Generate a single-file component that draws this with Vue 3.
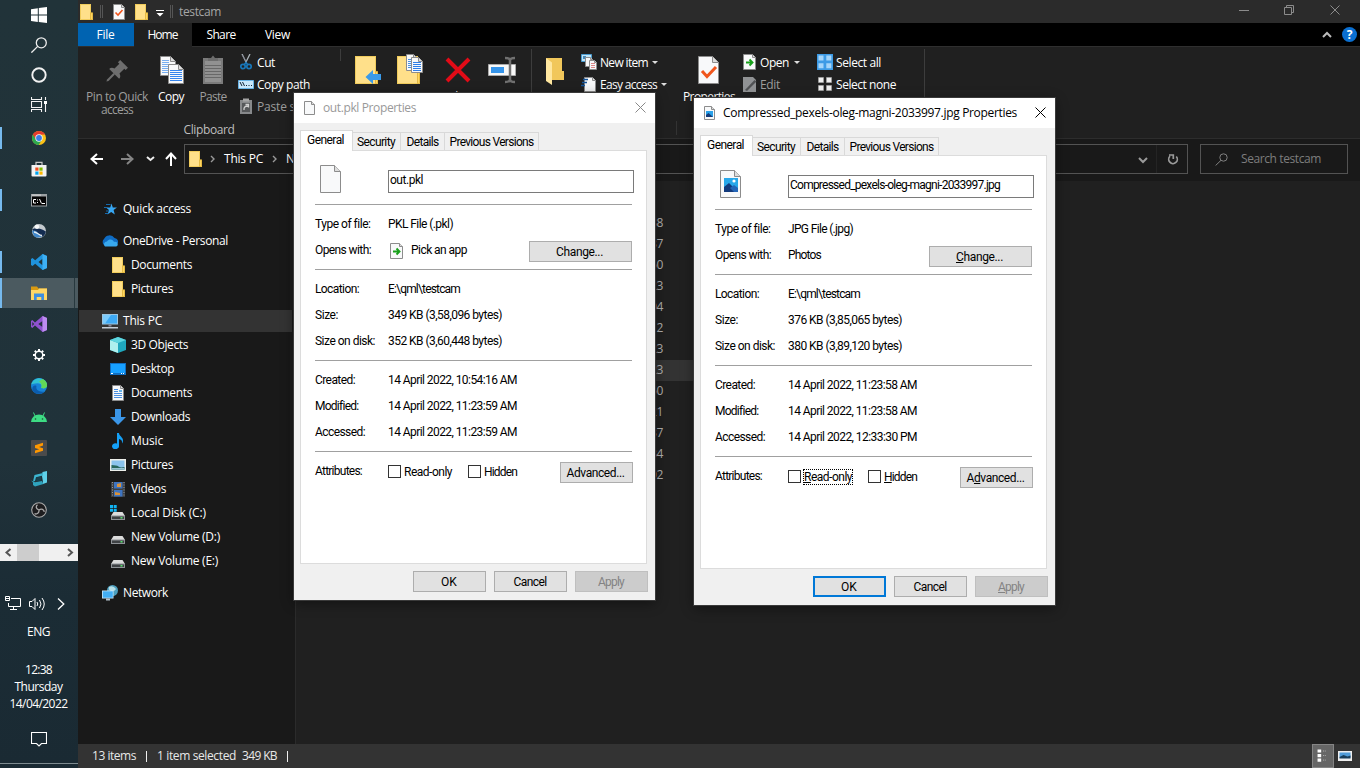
<script setup>
// Spreads letters so that a label takes the given width in pixels.
const vFit = {
  mounted(el, { value }) {
    if (!value) return
    const natural = el.getBoundingClientRect().width
    const count = el.textContent.trim().length
    el.style.letterSpacing = (value - natural) / count + 'px'
  },
}

const page = (x, y, w, h, f = 4) =>
  `<path d="M${x + 0.5} ${y + 0.5}h${w - f - 1}l${f} ${f}v${h - f - 1}h${-(w - 1)}z" fill="#f8f9fa" stroke="#8c8c8c"/><path d="M${x + w - f - 0.5} ${y + 0.5}v${f}h${f}" fill="#ddd" stroke="#8c8c8c"/>`
const docLines = (x, y, w, n, c = '#4a90e2') =>
  Array.from({ length: n }, (_, i) => `<path d="M${x} ${y + i * 2 + 0.5}h${w}" stroke="${c}"/>`).join('')
const folder = (x, y, w, h) =>
  `<path d="M${x} ${y}h${w - 2}v${h * 0.55}h2v${h * 0.45}h${-w}z" fill="#f1cc5c"/><path d="M${x + 1} ${y + 1}h${w - 4}v${h - 2}h${-(w - 4)}z" fill="#ffe08a"/><path d="M${x + w - 2.5} ${y + h * 0.55}h2v${h * 0.45 - 0.5}h-2z" fill="#fdd663" stroke="#d9a92f" stroke-width=".6"/>`
const drive = '<path d="M3.500 7h9l2.500 4H1z" fill="#dcdcdc"/><path d="M1 10.500h14V15H1z" fill="#8e9296"/><path d="M2 11.500h12V14H2z" fill="#3e4144"/><path d="M10.500 12h2v1.500h-2z" fill="#55e06a"/>'

const icons = {
  win: '<path d="M0 2.300 6.800 1.300V7.600H0zM7.800 1.100 16 0v7.600H7.800zM0 8.500h6.800v6.400L0 13.900zM7.800 8.500H16V16l-8.200-1.100z" fill="#fff"/>',
  search: '<circle cx="10.300" cy="5.800" r="5" fill="none" stroke="#eee" stroke-width="1.300"/><path d="M6.700 9.400.4 15.600" stroke="#eee" stroke-width="1.300"/>',
  cortana: '<circle cx="8" cy="8" r="6.700" fill="none" stroke="#f1f1f1" stroke-width="1.900"/>',
  tasks: '<path d="M.5 0v2.500h10V0M.5 15v-2.500h10V15M.5 4.500h10v6H.5zM14.500 0v3M14.500 7v8" fill="none" stroke="#f4f4f4" stroke-width="1.100"/><path d="M13 4h3v3h-3z" fill="#fff"/>',
  chrome: '<circle cx="8" cy="8" r="7" fill="#fbc116"/><path d="M1.900 4.500A7 7 0 0 0 7.700 15L11 9.700 8 8z" fill="#2da94f"/><path d="M1.900 4.500 5 9.800 8 8 8 4.700 14.100 4.500A7 7 0 0 0 1.900 4.500z" fill="#e33b2e"/><circle cx="8" cy="8" r="3.700" fill="#f5f5f5"/><circle cx="8" cy="8" r="2.900" fill="#3b7de9"/>',
  store: '<path d="M5 4.500V1.300h6v3.200" fill="none" stroke="#c8c8c8" stroke-width="1.200"/><path d="M.500 4h15v10.500a1 1 0 0 1-1 1h-13a1 1 0 0 1-1-1z" fill="#f3f3f3"/><path d="M4.300 6.500h3.200v3.200H4.300z" fill="#f25022"/><path d="M8.400 6.500h3.200v3.200H8.400z" fill="#7fba00"/><path d="M4.300 10.500h3.200v3.200H4.300z" fill="#00a4ef"/><path d="M8.400 10.500h3.200v3.200H8.400z" fill="#ffb900"/>',
  cmd: '<path d="M0 2h16v12.500H0z" fill="#9ba0a3"/><path d="M1 4.500h14v9H1z" fill="#050505"/><path d="M1 2.600h9v1H1z" fill="#ddd"/><path d="M5 7.500H2.500v3.500H5M6.500 7.500v1M6.500 10v1M8.500 7l2 4.500M11 11.500h3" fill="none" stroke="#fff" stroke-width="1"/>',
  globe: '<circle cx="8" cy="8" r="7" fill="#c3c9cd"/><path d="M1.200 6.500C4 4.500 9 5 14.900 8.500A7 7 0 0 1 12 13.700L4 11z" fill="#132c50"/><path d="M1 8c2-1.500 5 0 6 2s3 2.500 4.500 2.500A6 6 0 0 1 3 13z" fill="#3f86c8"/><path d="M3 9c3 0 5 3.500 8 3.500" stroke="#e8eef2" stroke-width="1.300" fill="none"/><circle cx="6" cy="3.800" r="2.200" fill="#f7f8f8"/>',
  vscode: '<path d="M11.500 0 16 2v12l-4.500 2L4.200 9.700 1.500 12 0 11.100V4.900L1.500 4l2.700 2.300zM11.500 4.800 7.500 8l4 3.200z" fill="#1f93dc" fill-rule="evenodd"/><path d="M11.500 0 16 2v12l-4.500 2z" fill="#3db0f4"/>',
  explorer: '<path d="M0 1.500h6l1.500 2H16v4H0z" fill="#d99a12"/><path d="M0 5h7l1-1.500h8V15H0z" fill="#ffd766"/><path d="M3 15V8.500h10V15h-2.700v-3H5.700v3z" fill="#3d8fe0"/>',
  vs: '<path d="M11.500 0 16 2v12l-4.500 2L4 9.600 1.300 12 0 11V5l1.300-1L4 6.400zM11.500 5 7.300 8l4.200 3zM1.300 6v4L3.200 8z" fill="#8f52cf" fill-rule="evenodd"/><path d="M11.500 0 16 2v12l-4.500 2z" fill="#bd8cf0"/>',
  gear: '<circle cx="8" cy="8" r="3.800" fill="none" stroke="#fff" stroke-width="1.500"/><g stroke="#fff" stroke-width="2"><path d="M8 2v2M8 12v2M2 8h2M12 8h2M3.800 3.800l1.300 1.300M10.900 10.900l1.300 1.300M12.200 3.800l-1.300 1.300M5.100 10.900l-1.300 1.300"/></g>',
  edge: '<circle cx="8" cy="8" r="8" fill="#1784d8"/><path d="M.3 6.500C1.500 1.500 7-.8 11.500.9 15.500 2.500 17 7 15.500 9c-1.500 2-5 1.500-5.500.5 1.500-2.500-.5-4.300-3.500-4.300C3.500 5.200 1 6 .3 6.500z" fill="#31c2d3"/><path d="M11.500.9C15.500 2.500 17 7 15.500 9c-1.500 2-5 1.500-5.500.5C12 7 9 4 8 3.500z" fill="#62d957"/><path d="M5.500 8C4.500 11 7 14.500 13.500 13.500 10 17 4 16.500 1.500 12.500.5 9 3 6.500 5.500 8z" fill="#0b5cad"/>',
  android: '<path d="M0 13a8 7.500 0 0 1 16 0z" fill="#3ddc84"/><path d="M4 7 2.500 3.500M12 7l1.500-3.500" stroke="#3ddc84"/><circle cx="4.500" cy="10" r=".8" fill="#1d4a34"/><circle cx="11.500" cy="10" r=".8" fill="#1d4a34"/>',
  sublime: '<rect width="16" height="16" rx="1" fill="#4b4b4b"/><path d="M4 5.300 12 2.800v2.800L8 7l4 1.200v2.600L4 13.300v-2.700L8.200 9.200 4 8z" fill="#ff9800"/>',
  azure: '<path d="M11.500 1 16 0v11.500L12 13v-2l-1-6z" fill="#5fd0e8"/><path d="M3.500 4 12 2v2.500L5 6.300 4 10l-2 .5z" fill="#3cb5d0"/><path d="M0 9.500l4 1.700 7-1.200 1.500 3L4 15.500l-2-1.500v-2.500z" fill="#2fa3bd"/><path d="M5.500 6.500 10 5.500v4l-5 1z" fill="#17414e"/>',
  obs: '<circle cx="8" cy="8" r="7.300" fill="#1d1d1f" stroke="#a9a9a9" stroke-width="1.100"/><g fill="none" stroke="#aaa" stroke-width="1.300"><path d="M8 8C5 7 4.500 4.500 6.500 2.800M8 8c2.500-2 5-.5 5.300 1.800M8 8c.2 3-2 4.700-4.500 3.700"/></g>',
  note: '<path d="M.5 1.500h15v11h-5L8 15l-2.500-2.500h-5z" fill="none" stroke="#fff" stroke-width="1.100"/>',
  net: '<path d="M6 2.500h9.500v8H3.500V7M8.500 11v3M5 13.500h7M.5.500h4v4h-4zM1 2.500h3" fill="none" stroke="#fff"/>',
  sound: '<path d="M.5 5.500h2.500l3-3v11l-3-3H.5z" fill="none" stroke="#fff"/><path d="M8 6q1.500 2 0 4M10.500 4q3 4 0 8M13 2q4.500 6 0 12" fill="none" stroke="#fff"/>',
  folder: folder(2, 0, 13, 16),
  prop: page(2, 0, 12, 16, 3) + '<path d="M4.500 8.500 7 11l4.500-5" fill="none" stroke="#f0561d" stroke-width="1.600"/>',
  cut: '<path d="M4 0 8.500 9M12 0 7.500 9" stroke="#aab2b8" stroke-width="1.300"/><path d="M4 1l4 6" stroke="#667" stroke-width=".6"/><g fill="none" stroke="#1876b8" stroke-width="1.700"><circle cx="5" cy="12.500" r="2.200"/><circle cx="11" cy="12.500" r="2.200"/><path d="M8.500 8 6 11M7.500 8l2.500 3"/></g>',
  path: '<path d="M.5 4.500h15v8H.5z" fill="#c9e7fb" stroke="#68b3e5"/><path d="M2 6l2 4M4.500 6l2 4" stroke="#123"/><path d="M8 9.500h1M10.500 9.500h1M13 9.500h1" stroke="#123"/>',
  pasteS: '<path d="M2 2h12v14H2z" fill="#87898b"/><path d="M5 .5h6v3H5z" fill="#a5a5a5"/><path d="M4 5h8v9H4z" fill="#56585a"/><path d="M6 12q-.5-4 4-4M7.500 6.500h3v3" stroke="#d0d0d0" fill="none" stroke-width="1.300"/>',
  newItem: '<path d="M.5.5h10v7H.5z" fill="#bfe4f7" stroke="#4b9cd0"/><path d="M2 2h3v3H2z" fill="#4789b9"/>' + page(4, 3, 8, 10, 2) + page(8, 6, 8, 10, 2) + docLines(10, 9, 4, 3, '#d88'),
  easy: page(3, 1, 12, 15, 3) + '<path d="M2 3.500h5M1 6.500h5M0 9.500h4" stroke="#15559a" stroke-width="1.400"/>',
  open: page(1, 0, 13, 16, 3) + '<path d="M4 8.500h6M7.500 5.500l3 3-3 3" fill="none" stroke="#18a01b" stroke-width="1.900"/>',
  edit: '<path d="M1 1h10l3 3v12H1z" fill="#909294"/><path d="M3 14 12.500 4l2 1.500L5 15z" fill="#505254"/>',
  selAll: '<path d="M0 0h16v16H0z" fill="#3d9be6"/><path d="M1.500 1.500h5v5h-5zM9.300 1.500h5v5h-5zM1.500 9.300h5v5h-5zM9.300 9.300h5v5h-5z" fill="#a5d5fa"/>',
  selNone: '<path d="M1.500 1.500h5v5h-5zM9.500 1.500h5v5h-5zM1.500 9.500h5v5h-5zM9.500 9.500h5v5h-5z" fill="#eee" stroke="#aaa" stroke-width=".6"/>',
  star: '<path d="M9.500 2.500l1.300 3.900 4.200.1-3.400 2.600 1.200 4.400-3.600-2.500-3.700 2.500 1.500-4.400L4 6.500h4.200z" fill="#38a7f3"/><path d="M4 3.500h4.500M2 6.500h4M4 10h3M3 12.500h3.500" stroke="#1769aa" stroke-width="1.100"/>',
  cloud: '<path d="M2 12a4 4 0 0 1 0-6 6 6 0 0 1 10.500-1c3 .5 4 3 3.500 5l-4 3z" fill="#0f6cc4"/><path d="M3 13.500c-2-1-1-5 2-5 2-3 6-2.500 7 .5 4-1 5 4 2 4.500z" fill="#39a9ee"/>',
  pc: '<path d="M0 1h16v10.500H0z" fill="#9bc6e2"/><path d="M1 2h14v8.500H1z" fill="#3eaaf5"/><path d="M1 2h8L3 10.500H1z" fill="#7cccfd"/><path d="M6.500 11.500h3v2h-3z" fill="#889"/><path d="M0 14h16v1.500H0z" fill="#c3ced8"/>',
  cube: '<path d="M0 3 8 0l8 3v10l-8 3-8-3z" fill="#1fa7bd"/><path d="M0 3l8 3v10l-8-3z" fill="#aef0ee"/><path d="M0 3l8-3 8 3-8 3z" fill="#5fd6df"/>',
  desk: '<path d="M0 2h16v12H0z" fill="#0f6dc0"/><path d="M1 3h14v9H1z" fill="#17a0ff"/><path d="M1 12.500h2M11 12.500h1M13 12.500h1" stroke="#fff"/>',
  doc: page(2, 0, 12, 16, 3) + docLines(4, 4, 4, 2) + docLines(4, 8, 8, 3) + '<path d="M9 5h3v2H9z" fill="#6ab4e8"/>',
  down: '<path d="M5 0h6v8h5l-8 8-8-8h5z" fill="#3b96e8"/>',
  music: '<path d="M7 0h2c0 3 4 4 4 7.500 0 1.500-.5 2.500-1 3 .5-3-1-4-3-4.500v7a3.500 3 0 1 1-2-2.500z" fill="#14a0f7"/>',
  pic: '<path d="M0 2h16v12H0z" fill="#eceeea"/><path d="M1.500 3.500h13v9h-13z" fill="#8cc4ed"/><path d="M1.500 8q5 0 7 1.500t6 .5v2.500h-13z" fill="#27675c"/><path d="M1.500 11h13v1.500h-13z" fill="#9bc5d5"/>',
  video: '<path d="M1 1h14v15H1z" fill="#3c3f42"/><path d="M4 1h8.500v6.500H4zM4 9h8.500v6.500H4z" fill="#3e74c0"/><path d="M7 3l4-1v4H7zM5 11l5 1v2H5z" fill="#d9923a"/><path d="M2.500 1v15M14 1v15" stroke="#999" stroke-dasharray="1 1.500"/>',
  diskC: drive + '<path d="M0 0h3v3H0zM3.700 0h3v3h-3zM0 3.700h3v3H0zM3.700 3.700h3v3h-3z" fill="#10b4f4"/>',
  disk: drive,
  network: '<circle cx="10.500" cy="5.500" r="5.500" fill="#4d9fbe"/><path d="M7 2q4-2 7 2-2 3-5 2T7 2" fill="#b7dfe7"/><path d="M0 5.500h11.500v8H0z" fill="#cbe8fb"/><path d="M.8 6.300h10v6.400H.8z" fill="#43aef4"/><path d="M4 13.500h4v2H4z" fill="#b3c0ca"/>',
  blank: page(2, 1, 11, 14, 3),
  photo: page(2, 1, 11, 14, 3) + '<path d="M4 6h7v6H4z" fill="#2aa2ea"/><path d="M4 10l2.500-2L11 12H4z" fill="#143a78"/>',
  // Large pictures, drawn on a 32 × 32 canvas.
  pin: '<g transform="translate(0 1) rotate(45 16 16)" fill="#6e6e6e"><path d="M10.500 6h11v3.200h-2V16q3.500 1 3.500 4H9q0-3 3.500-4V9.200h-2z"/><path d="M15 20h2v9l-1 2-1-2z"/></g>',
  copy: page(5, 2, 16, 20, 5) + docLines(7, 6, 7, 7, '#78aef0') + page(13, 10, 16, 20, 5) + docLines(15, 16, 12, 6, '#3585ee'),
  paste: '<path d="M6 4h20v26H6z" fill="#7b7b7b"/><path d="M8 7h16v21H8z" fill="#919191"/><path d="M11 7V4h3l2-2.500L18 4h3v3z" fill="#6d6d6d"/>' + [11, 14, 17, 20, 23].map((y) => `<path d="M8 ${y}.5h16" stroke="#686868"/>`).join(''),
  moveTo: folder(3, 2, 23, 28) + '<path d="M13.500 23 21 16v4h8v6h-8v4z" fill="#3a9ae8"/>',
  copyTo: folder(3, 2, 23, 28) + page(12, 0, 12, 17, 4) + docLines(14, 5, 6, 5) + page(17, 3, 12, 16, 4) + docLines(19, 8, 8, 5, '#2f7fe8'),
  del: '<path d="M5 5 27 27M27 5 5 27" stroke="#e30b17" stroke-width="4"/>',
  rename: '<path d="M2.500 10.500h27v11h-27z" fill="#f7f7f7" stroke="#aaa"/><path d="M5 13h13v6H5z" fill="#3594ea"/><path d="M19 4q5 0 5 2.500v19Q24 28 19 28M29 4q-5 0-5 2.500M24 25.500Q24 28 29 28" fill="none" stroke="#707070" stroke-width="2.500"/>',
  newF: '<path d="M6 4h16v13h2v9H11z" fill="#f1c75b"/><path d="M6 4l6 4.500V31l-6-4z" fill="#ffe7a0"/>',
  props: page(5, 2, 21, 28, 6) + '<path d="M9 17l5 5.500L23 13" fill="none" stroke="#f0561d" stroke-width="3"/>',
  blankL: page(5, 2, 21, 28, 6),
  photoL: page(5, 2, 21, 28, 6) + '<path d="M9 10h14v14H9z" fill="#28a8ea"/><circle cx="19" cy="13" r="1.600" fill="#fff"/><path d="M9 19l5-4 9 9H9z" fill="#123a7c"/><path d="M15 20l4-3 4 3v4h-4z" fill="#2466b8"/>',
}

const launchers = [
  { i: 'chrome', run: true }, { i: 'store' }, { i: 'cmd', run: true }, { i: 'globe' },
  { i: 'vscode', run: true }, { i: 'explorer', run: true, on: true }, { i: 'vs' }, { i: 'gear' },
  { i: 'edge' }, { i: 'android' }, { i: 'sublime' }, { i: 'azure' }, { i: 'obs' },
]

const tree = [
  [{ i: 'star', t: 'Quick access', w: 68 }],
  [
    { i: 'cloud', t: 'OneDrive - Personal', w: 105 },
    { i: 'folder', t: 'Documents', w: 61, sub: true },
    { i: 'folder', t: 'Pictures', w: 42, sub: true },
  ],
  [
    { i: 'pc', t: 'This PC', w: 39, on: true },
    { i: 'cube', t: '3D Objects', w: 57, sub: true },
    { i: 'desk', t: 'Desktop', w: 43, sub: true },
    { i: 'doc', t: 'Documents', w: 61, sub: true },
    { i: 'down', t: 'Downloads', w: 59, sub: true },
    { i: 'music', t: 'Music', w: 32, sub: true },
    { i: 'pic', t: 'Pictures', w: 42, sub: true },
    { i: 'video', t: 'Videos', w: 35, sub: true },
    { i: 'diskC', t: 'Local Disk (C:)', w: 75, sub: true },
    { i: 'disk', t: 'New Volume (D:)', w: 89, sub: true },
    { i: 'disk', t: 'New Volume (E:)', w: 87, sub: true },
  ],
  [{ i: 'network', t: 'Network', w: 45 }],
]

const minutes = ['38', '37', '50', '23', '04', '12', '23', '23', '50', '21', '37', '34', '02']

const tabs = [
  { t: 'Security', w: 38, c: 't-sec' }, { t: 'Details', w: 32, c: 't-det' }, { t: 'Previous Versions', w: 84, c: 't-prev' },
]

const dialogs = [
  {
    id: 'first', title: 'out.pkl Properties', tw: 93, icon: 'blank', big: 'blankL', name: 'out.pkl', nw: 33,
    type: 'PKL File (.pkl)', app: 'Pick an app', aw: 56, appIcon: true,
    size: '349 KB (3,58,096 bytes)', disk: '352 KB (3,60,448 bytes)',
    times: ['14 April 2022, 10:54:16 AM', '14 April 2022, 11:23:59 AM', '14 April 2022, 11:23:59 AM'],
  },
  {
    id: 'second', active: true, title: 'Compressed_pexels-oleg-magni-2033997.jpg Properties', tw: 294, icon: 'photo', big: 'photoL',
    name: 'Compressed_pexels-oleg-magni-2033997.jpg', nw: 210,
    type: 'JPG File (.jpg)', app: 'Photos', aw: 33,
    size: '376 KB (3,85,065 bytes)', disk: '380 KB (3,89,120 bytes)',
    times: ['14 April 2022, 11:23:58 AM', '14 April 2022, 11:23:58 AM', '14 April 2022, 12:33:30 PM'],
  },
]
const stamps = [['Created:', 40], ['Modified:', 43], ['Accessed:', 50]]
</script>

<template>
  <div class="screen">
    <aside class="taskbar">
      <div v-for="k in ['win', 'search', 'cortana', 'tasks']" :key="k" class="sys">
        <svg class="i16" viewBox="0 0 16 16" v-html="icons[k]" />
      </div>
      <div class="launchers">
        <div v-for="l in launchers" :key="l.i" class="launcher" :class="{ run: l.run, on: l.on }">
          <svg class="i16" viewBox="0 0 16 16" v-html="icons[l.i]" />
        </div>
      </div>
      <div class="hscroll">
        <svg class="arrow" viewBox="0 0 17 17"><path d="M10.500 5 6.500 8.500l4 3.500" /></svg>
        <div class="thumb"></div>
        <svg class="arrow" viewBox="0 0 17 17"><path d="M7 5l4 3.500L7 12" /></svg>
      </div>
      <div class="tray">
        <svg class="i16" viewBox="0 0 16 16" v-html="icons.net" />
        <svg class="i16" viewBox="0 0 16 16" v-html="icons.sound" />
        <svg class="more" viewBox="0 0 8 12"><path d="M1 .5 6.800 6 1 11.500" /></svg>
      </div>
      <div class="lang"><span v-fit="23">ENG</span></div>
      <div class="clock">
        <span v-fit="27">12:38</span>
        <span v-fit="48">Thursday</span>
        <span v-fit="58">14/04/2022</span>
      </div>
      <div class="notes"><svg class="i16" viewBox="0 0 16 16" v-html="icons.note" /></div>
    </aside>

    <main class="explorer">
      <header class="titlebar">
        <svg class="i16" viewBox="0 0 16 16" v-html="icons.folder" />
        <i class="bar b1"></i>
        <svg class="i16 q2" viewBox="0 0 16 16" v-html="icons.prop" />
        <svg class="i16 q3" viewBox="0 0 16 16" v-html="icons.folder" />
        <svg class="quick" viewBox="0 0 8 8"><path d="M0 1.500h8" stroke="#fff" /><path d="M.5 4h7L4 7.500z" fill="#fff" /></svg>
        <i class="bar b2"></i>
        <span class="wtitle"><span v-fit="42">testcam</span></span>
        <svg class="controls" viewBox="0 0 112 23">
          <path d="M5 10.500h10M50.500 7.500h7v7h-7zM52.500 7.500v-2h7v7h-2M96.500 5.500l9 9M105.500 5.500l-9 9" />
        </svg>
      </header>
      <nav class="tabs">
        <span class="rt file"><span v-fit="18">File</span></span>
        <span class="rt home"><span v-fit="30">Home</span></span>
        <span class="rt share"><span v-fit="29">Share</span></span>
        <span class="rt view"><span v-fit="25">View</span></span>
        <svg class="fold" viewBox="0 0 10 8"><path d="M1 6l4-4 4 4" /></svg>
        <span class="help">?</span>
      </nav>

      <section class="ribbon">
        <div class="group clip">
          <div class="tools">
            <div class="big w-pin dim"><svg viewBox="0 0 32 32" v-html="icons.pin" /><span v-fit="62">Pin to Quick</span><span v-fit="32">access</span></div>
            <div class="big w-copy"><svg viewBox="0 0 32 32" v-html="icons.copy" /><span v-fit="26">Copy</span></div>
            <div class="big w-paste dim"><svg viewBox="0 0 32 32" v-html="icons.paste" /><span v-fit="27">Paste</span></div>
            <div class="small s1">
              <div class="cmd"><svg class="i16" viewBox="0 0 16 16" v-html="icons.cut" /><span v-fit="18">Cut</span></div>
              <div class="cmd"><svg class="i16" viewBox="0 0 16 16" v-html="icons.path" /><span v-fit="53">Copy path</span></div>
              <div class="cmd dim"><svg class="i16" viewBox="0 0 16 16" v-html="icons.pasteS" /><span v-fit="78">Paste shortcut</span></div>
            </div>
          </div>
          <div class="caption"><span v-fit="51">Clipboard</span></div>
        </div>
        <i class="sep short"></i>
        <div class="big w-move"><svg viewBox="0 0 32 32" v-html="icons.moveTo" /><span>Move</span></div>
        <div class="big w-cto"><svg viewBox="0 0 32 32" v-html="icons.copyTo" /><span>Copy</span></div>
        <div class="big w-del"><svg viewBox="0 0 32 32" v-html="icons.del" /><span>Delete</span></div>
        <div class="big w-ren"><svg viewBox="0 0 32 32" v-html="icons.rename" /><span>Rename</span></div>
        <i class="sep"></i>
        <div class="big w-new"><svg viewBox="0 0 32 32" v-html="icons.newF" /><span>New</span></div>
        <div class="small s2">
          <div class="cmd"><svg class="i16" viewBox="0 0 16 16" v-html="icons.newItem" /><span v-fit="48">New item</span><i class="caret"></i></div>
          <div class="cmd"><svg class="i16" viewBox="0 0 16 16" v-html="icons.easy" /><span v-fit="57">Easy access</span><i class="caret"></i></div>
        </div>
        <i class="sep low"></i>
        <div class="big w-prop"><svg viewBox="0 0 32 32" v-html="icons.props" /><span v-fit="52">Properties</span></div>
        <div class="small s3">
          <div class="cmd"><svg class="i16" viewBox="0 0 16 16" v-html="icons.open" /><span v-fit="29">Open</span><i class="caret"></i></div>
          <div class="cmd dim"><svg class="i16" viewBox="0 0 16 16" v-html="icons.edit" /><span v-fit="20">Edit</span></div>
        </div>
        <div class="small s4">
          <div class="cmd"><svg class="i16" viewBox="0 0 16 16" v-html="icons.selAll" /><span v-fit="45">Select all</span></div>
          <div class="cmd"><svg class="i16" viewBox="0 0 16 16" v-html="icons.selNone" /><span v-fit="60">Select none</span></div>
        </div>
        <i class="sep"></i>
      </section>

      <section class="address">
        <svg class="travel" viewBox="0 0 106 42">
          <g fill="none" stroke-width="2">
            <path d="M25 20H14M19 15l-5.500 5 5.500 5" stroke="#fff" />
            <path d="M43 20h11M49 15l5.500 5-5.500 5" stroke="#858585" />
            <path d="M69 18l3.500 3 3.500-3" stroke="#eee" />
            <path d="M93 27V15M88 20l5-5.500 5 5.500" stroke="#fff" />
          </g>
        </svg>
        <div class="pathbox">
          <svg class="i16 pf" viewBox="0 0 16 16" v-html="icons.folder" />
          <svg class="chev c1" viewBox="0 0 5 8"><path d="M1 1l3 3-3 3" /></svg>
          <span v-fit="39">This PC</span>
          <svg class="chev c2" viewBox="0 0 5 8"><path d="M1 1l3 3-3 3" /></svg>
          <span class="vol"><span v-fit="87">New Volume (E:)</span></span>
          <svg class="pathend" viewBox="0 0 56 28">
            <path d="M8 13l4 4 4-4" stroke-width="2" />
            <path d="M25.500 0v28" stroke="#242424" />
            <path d="M39 11.200a4.300 4.300 0 1 0 6.300.3M38 10h4.300v4" stroke-width="1.700" />
          </svg>
        </div>
        <div class="find">
          <svg viewBox="0 0 13 13"><circle cx="8.500" cy="4.500" r="3.700" /><path d="M6 7.300.6 12.500" /></svg>
          <span v-fit="80">Search testcam</span>
        </div>
      </section>

      <section class="body">
        <div class="tree">
          <div v-for="(g, gi) in tree" :key="gi" class="branch">
            <div v-for="r in g" :key="r.t" class="node" :class="{ sub: r.sub, on: r.on }">
              <svg class="i16" viewBox="0 0 16 16" v-html="icons[r.i]" /><span v-fit="r.w">{{ r.t }}</span>
            </div>
          </div>
        </div>
        <div class="files">
          <div v-for="(m, mi) in minutes" :key="mi" class="frow" :class="{ on: mi === 7 }"><span v-fit="13">{{ m }}</span></div>
        </div>
      </section>

      <footer class="status">
        <span v-fit="44">13 items</span><i></i>
        <span v-fit="79">1 item selected</span><span class="kb"><span v-fit="35">349 KB</span></span><i></i>
        <div class="modes">
          <svg class="m1" viewBox="0 0 22 24"><path d="M5 6.500h4M5 11.500h4M5 16.500h4" stroke="#fff" stroke-width="3.500" /><path d="M11 6.500h4M11 11.500h4M11 16.500h4" stroke="#bbb" stroke-dasharray="1 1" /></svg>
          <svg class="m2" viewBox="0 0 16 16"><path d="M1 3h14v10H1z" fill="#eee" /><path d="M2.500 4.500h11v5h-11z" fill="#4f9bd8" /><path d="M2.500 9l4-2 4 1.500 3-1v3h-11z" fill="#173d5a" /></svg>
        </div>
      </footer>
    </main>

    <div v-for="d in dialogs" :key="d.id" class="dialog" :class="[d.id, { active: d.active }]">
      <div class="dhead">
        <svg class="i16" viewBox="0 0 16 16" v-html="icons[d.icon]" />
        <span v-fit="d.tw">{{ d.title }}</span>
        <svg class="x" viewBox="0 0 11 11"><path d="M.5.500l10 10M10.500.500l-10 10" /></svg>
      </div>
      <div class="dtabs">
        <div class="dt general"><span v-fit="37">General</span></div>
        <div v-for="t in tabs" :key="t.t" class="dt" :class="t.c"><span v-fit="t.w">{{ t.t }}</span></div>
      </div>
      <div class="panel">
        <div class="namerow">
          <svg viewBox="0 0 32 32" v-html="icons[d.big]" />
          <div class="input"><span v-fit="d.nw">{{ d.name }}</span></div>
        </div>
        <div class="sect">
          <div class="row"><div class="lab"><span v-fit="55">Type of file:</span></div><span v-fit="65">{{ d.type }}</span></div>
          <div class="row">
            <div class="lab"><span v-fit="56">Opens with:</span></div>
            <svg v-if="d.appIcon" class="i16 app" viewBox="0 0 16 16" v-html="icons.open" />
            <span v-fit="d.aw">{{ d.app }}</span>
            <div class="btn change"><span v-fit="47"><u>C</u>hange...</span></div>
          </div>
        </div>
        <div class="sect tall">
          <div class="row"><div class="lab"><span v-fit="44">Location:</span></div><span v-fit="72">E:\qml\testcam</span></div>
          <div class="row"><div class="lab"><span v-fit="23">Size:</span></div><span v-fit="114">{{ d.size }}</span></div>
          <div class="row"><div class="lab"><span v-fit="60">Size on disk:</span></div><span v-fit="114">{{ d.disk }}</span></div>
        </div>
        <div class="sect tall">
          <div v-for="(s, si) in stamps" :key="s[0]" class="row"><div class="lab"><span v-fit="s[1]">{{ s[0] }}</span></div><span v-fit="129">{{ d.times[si] }}</span></div>
        </div>
        <div class="sect attrs">
          <div class="row">
            <div class="lab"><span v-fit="47">Attributes:</span></div>
            <i class="box"></i><div class="ro"><span v-fit="48"><u>R</u>ead-only</span></div>
            <i class="box"></i><div class="hid"><span v-fit="33"><u>H</u>idden</span></div>
            <div class="btn adv"><span v-fit="58">A<u>d</u>vanced...</span></div>
          </div>
        </div>
      </div>
      <div class="dfoot">
        <div class="btn ok"><span v-fit="16">OK</span></div>
        <div class="btn"><span v-fit="33">Cancel</span></div>
        <div class="btn off"><span v-fit="26"><u>A</u>pply</span></div>
      </div>
    </div>
  </div>
</template>

<style>
html, body { margin: 0; background: #202020; overflow: hidden; }
</style>

<style scoped>
* { box-sizing: border-box; }
.screen { position: relative; display: flex; width: 1360px; height: 768px; overflow: hidden; font: 12px/16px "Open Sans", "Noto Sans", sans-serif; color: #fff; }
.screen span { display: inline-block; white-space: nowrap; flex: none; }
.screen svg { display: block; flex: none; }
.i16 { width: 16px; height: 16px; }

.taskbar { width: 78px; height: 768px; flex: none; display: flex; flex-direction: column; background: linear-gradient(#213339, #20323a 60%, #1b2c35 78%, #1a2a33); }
.sys { height: 30px; display: flex; align-items: center; justify-content: center; }
.launchers { margin-top: 3px; height: 421px; }
.launcher { height: 31px; display: flex; align-items: center; justify-content: center; padding-bottom: 1px; background: linear-gradient(#76b9ed, #76b9ed) no-repeat 0 4px / 0 22px; }
.launcher.run { background-size: 2px 22px; }
.launcher.on { height: 30px; margin-bottom: 1px; border-left: 2px solid #76b9ed; padding: 0 2px 0 0; background: linear-gradient(90deg, #4b5a60 72px, #27383e 72px, #27383e 73px, #4b5a60 73px); }
.hscroll { height: 17px; display: flex; background: #f0f0f0; }
.arrow { width: 17px; height: 17px; fill: none; stroke: #555; stroke-width: 2; }
.thumb { width: 22px; background: #cdcdcd; margin-right: 22px; }
.tray { height: 16px; margin-top: 35px; display: flex; align-items: center; padding-left: 5px; gap: 8px; }
.more { width: 8px; height: 12px; margin-left: 4px; fill: none; stroke: #fff; stroke-width: 1.3; }
.lang { margin-top: 12px; text-align: center; height: 16px; padding-right: 1px; }
.clock { margin-top: 21px; display: flex; flex-direction: column; align-items: center; line-height: 17px; padding-right: 1px; }
.notes { margin-top: 18px; height: 34px; border-bottom: 1px solid #7e8b90; padding: 1px 0 0 31px; }

.explorer { flex: 1; min-width: 0; display: flex; flex-direction: column; }
.titlebar { height: 23px; background: #2b2b2b; display: flex; align-items: center; flex: none; color: #a6a6a6; }
.bar { width: 3px; height: 13px; border: solid #555; border-width: 0 1px; }
.b1 { margin-left: 6px; }
.q2 { margin-left: 8px; }
.q3 { margin-left: 6px; }
.quick { width: 8px; height: 8px; margin: 2px 0 0 7px; }
.b2 { margin-left: 6px; }
.wtitle { margin-left: 6px; }
.controls { width: 112px; height: 23px; margin-left: auto; margin-right: 14px; fill: none; stroke: #8c8c8c; }
.tabs { height: 24px; background: #000; display: flex; align-items: center; flex: none; border-bottom: 1px solid #2f2f2f; }
.rt { height: 23px; line-height: 24px; text-align: center; padding-right: 1px; }
.file { width: 56px; background: #0063b1; }
.home { width: 58px; background: #202020; height: 24px; margin-bottom: -1px; }
.share { width: 59px; }
.view { width: 53px; padding-right: 0; }
.fold { width: 10px; height: 8px; margin-left: auto; fill: none; stroke: #bbb; stroke-width: 2; }
.help { width: 15px; height: 15px; margin: 0 3px 0 10px; border-radius: 50%; background: #0a6fd1; text-align: center; line-height: 15px; font-weight: 700; }

.ribbon { height: 92px; background: #202020; border-bottom: 1px solid #2d2d2d; display: flex; flex: none; align-items: flex-start; line-height: 13px; }
.group { display: flex; flex-direction: column; height: 91px; }
.clip { width: 262px; }
.tools { display: flex; height: 74px; }
.caption { text-align: center; line-height: 17px; color: #bfbfbf; }
.big { padding-top: 7px; display: flex; flex-direction: column; align-items: center; flex: none; }
.big svg { width: 32px; height: 32px; margin-bottom: 4px; }
.dim { color: #9d9d9d; }
.w-pin { width: 70px; margin-left: 4px; }
.w-copy { width: 38px; }
.w-paste { width: 46px; margin-right: 1px; }
.small { padding-top: 4px; flex: none; }
.cmd { height: 22px; display: flex; align-items: center; }
.s1 { width: 103px; padding-left: 1px; }
.s1 .cmd span { margin-left: 3px; }
.sep { width: 1px; height: 88px; margin-top: 2px; background: #3d3d3d; flex: none; }
.short { height: 12px; }
.low { height: 14px; margin-top: 74px; background: #333; }
.w-move { width: 54px; }
.w-cto { width: 30px; }
.w-del { width: 50px; margin-left: 8px; }
.w-ren { width: 38px; margin-right: 10px; }
.w-new { width: 47px; }
.s2 { width: 97px; padding-left: 2px; }
.s2 .cmd span, .s4 .cmd span { margin-left: 3px; }
.caret { margin-left: 4px; border: 3px solid transparent; border-top-color: #ddd; border-bottom: 0; }
.w-prop { width: 64px; }
.s3 { width: 74px; padding-left: 1px; }
.s3 .cmd span { margin-left: 2px; }
.s3 .caret { margin-left: 5px; }
.s4 { width: 109px; padding-left: 2px; }

.address { height: 42px; flex: none; background: #191919; display: flex; }
.travel { width: 106px; height: 42px; }
.pathbox { width: 1004px; height: 30px; margin-top: 5px; border: 1px solid #535353; display: flex; align-items: center; }
.pf { margin-left: 2px; }
.chev { width: 5px; height: 8px; fill: none; stroke: #999; stroke-width: 1.4; }
.c1 { margin: 0 9px 0 7px; }
.c2 { margin: 0 9px; }
.pathend { width: 56px; height: 28px; margin-left: auto; fill: none; stroke: #9a9a9a; }
.find { width: 148px; height: 30px; margin: 5px 0 0 12px; border: 1px solid #535353; display: flex; align-items: center; color: #7d7d7d; }
.find svg { width: 13px; height: 13px; margin: 0 13px 0 14px; fill: none; stroke: #808080; }

.body { flex: 1; min-height: 0; display: flex; background: #202020; }
.tree { width: 218px; background: #191919; border-right: 1px solid #2b2b2b; padding-top: 16px; display: flex; flex-direction: column; gap: 8px; }
.branch { display: flex; flex-direction: column; }
.node { height: 24px; display: flex; align-items: center; padding-left: 24px; gap: 5px; }
.node.sub { padding-left: 32px; }
.node.on { height: 22px; margin: 1px 3px 1px 1px; padding-left: 23px; background: #333; }
.files { flex: 1; padding-top: 32px; }
.frow { height: 21px; width: 720px; padding: 2px 0 0 354px; color: #b0b0b0; }
.frow.on { background: #333; }

.status { height: 24px; flex: none; background: #333; display: flex; align-items: center; padding-left: 14px; color: #e8e8e8; }
.status i { width: 1px; height: 11px; background: #eee; margin: 0 10px; }
.kb { margin-left: 6px; }
.modes { margin-left: auto; display: flex; align-items: center; padding-right: 7px; gap: 3px; }
.m1 { width: 22px; height: 24px; background: #666; border: 1px solid #858585; }
.m2 { width: 16px; height: 16px; }

.dialog { position: absolute; width: 361px; height: 507px; background: #f0f0f0; color: #000; font: 12px/16px Roboto, "Liberation Sans", sans-serif; box-shadow: 0 0 0 1px #3a3a3a, 0 3px 12px rgba(0, 0, 0, .45); display: flex; flex-direction: column; }
.first { left: 294px; top: 93px; }
.second { left: 694px; top: 98px; }
.dialog u { text-decoration: none; }
.active u { text-decoration: underline; }
.dhead { height: 30px; background: #fff; display: flex; align-items: center; padding: 0 10px 0 8px; color: #999; font-family: "Open Sans", "Noto Sans", sans-serif; flex: none; }
.active .dhead { color: #000; }
.dhead span { margin-left: 5px; }
.x { width: 11px; height: 11px; margin: 0 -1px 2px auto; fill: none; stroke: #888; }
.active .x { stroke: #000; }
.dtabs { height: 27px; display: flex; align-items: flex-end; padding-left: 6px; flex: none; }
.dt { height: 18px; border: 1px solid #d9d9d9; border-left: 0; border-bottom: 0; text-align: center; line-height: 18px; padding-right: 1px; }
.general { width: 53px; height: 21px; border-left: 1px solid #d9d9d9; background: #fff; margin-bottom: -1px; position: relative; line-height: 18px; padding-right: 2px; }
.t-sec { width: 48px; }
.t-det { width: 44px; padding-right: 0; }
.t-prev { width: 94px; padding-right: 0; }
.panel { width: 347px; height: 414px; margin-left: 6px; background: #fff; border: 1px solid #dcdcdc; padding-left: 14px; flex: none; }
.namerow { height: 54px; width: 317px; border-bottom: 1px solid #a0a0a0; display: flex; }
.namerow svg { width: 32px; height: 32px; margin-top: 12px; }
.input { width: 246px; height: 23px; margin: 19px -2px 0 41px; border: 1px solid #7a7a7a; padding: 1px 0 0 1px; flex: none; }
.sect { width: 317px; height: 65px; padding-top: 6px; border-bottom: 1px solid #a0a0a0; }
.tall { height: 91px; }
.attrs { border: 0; width: 318px; }
.row { height: 26px; display: flex; align-items: center; }
.lab { width: 73px; flex: none; }
.app { margin: 1px 6px 0 1px; }
.btn { width: 73px; height: 21px; border: 1px solid #adadad; background: #e1e1e1; display: flex; align-items: center; justify-content: center; flex: none; padding: 1px 1px 0 0; }
.change { width: 103px; margin-left: auto; margin-top: 3px; padding-right: 2px; }
.box { width: 13px; height: 13px; border: 1px solid #333; background: #fff; margin-top: 1px; flex: none; }
.ro { width: 50px; margin: 1px 15px 0 2px; padding-left: 1px; height: 16px; }
.active .ro { outline: 1px dotted #000; outline-offset: -1px; }
.hid { margin: 1px 0 0 3px; }
.adv { margin-left: auto; margin-top: 3px; padding-right: 2px; }
.dfoot { display: flex; justify-content: flex-end; gap: 8px; padding: 7px 7px 0 0; }
.active .ok { border: 2px solid #0078d7; padding-top: 0; }
.off { background: #ccc; border-color: #bfbfbf; color: #838383; }
</style>
